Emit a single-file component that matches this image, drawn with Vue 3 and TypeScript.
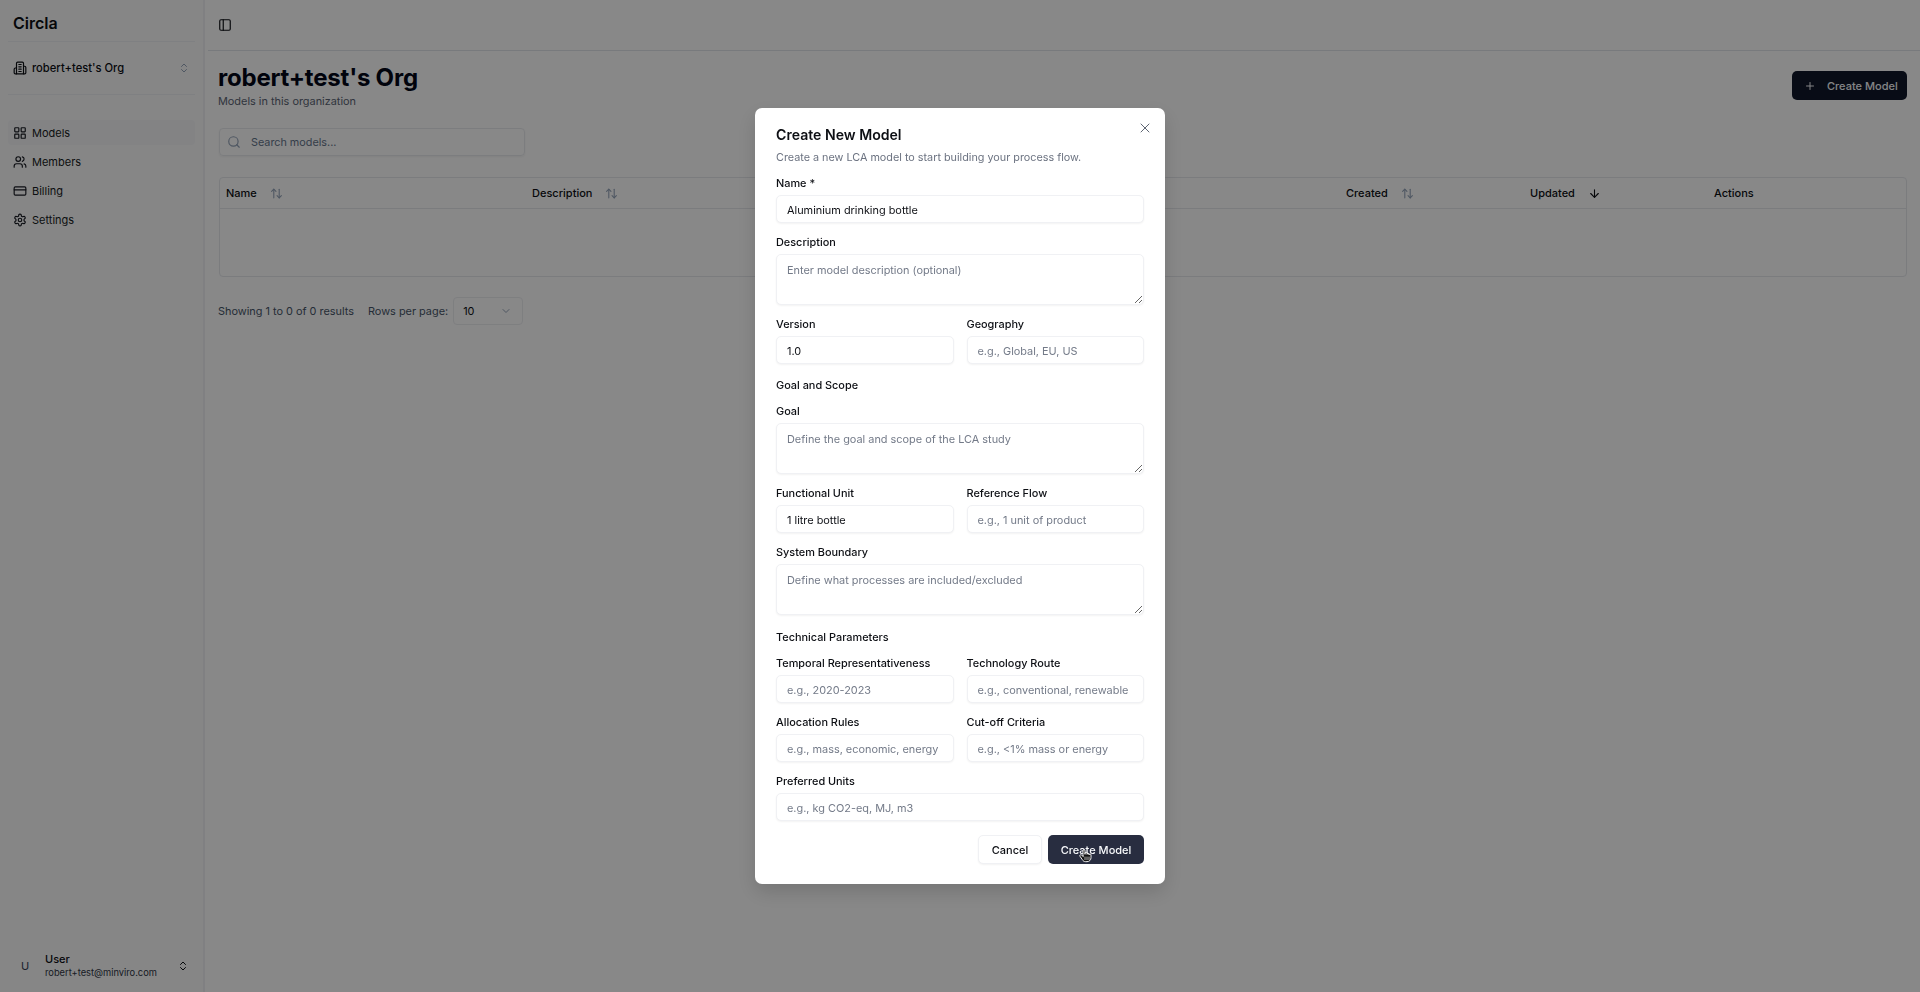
<script setup lang="ts">
const nav = [
  { label: 'Models', active: true, icon: '<rect x="3" y="3" width="7" height="7" rx="1"/><rect x="14" y="3" width="7" height="7" rx="1"/><rect x="14" y="14" width="7" height="7" rx="1"/><rect x="3" y="14" width="7" height="7" rx="1"/>' },
  { label: 'Members', active: false, icon: '<path d="M16 21v-2a4 4 0 0 0-4-4H6a4 4 0 0 0-4 4v2"/><circle cx="9" cy="7" r="4"/><path d="M22 21v-2a4 4 0 0 0-3-3.87"/><path d="M16 3.13a4 4 0 0 1 0 7.75"/>' },
  { label: 'Billing', active: false, icon: '<rect x="2" y="5" width="20" height="14" rx="2"/><line x1="2" y1="10" x2="22" y2="10"/>' },
  { label: 'Settings', active: false, icon: '<path d="M12.22 2h-.44a2 2 0 0 0-2 2v.18a2 2 0 0 1-1 1.73l-.43.25a2 2 0 0 1-2 0l-.15-.08a2 2 0 0 0-2.73.73l-.22.38a2 2 0 0 0 .73 2.73l.15.1a2 2 0 0 1 1 1.72v.51a2 2 0 0 1-1 1.74l-.15.09a2 2 0 0 0-.73 2.73l.22.38a2 2 0 0 0 2.73.73l.15-.08a2 2 0 0 1 2 0l.43.25a2 2 0 0 1 1 1.73V20a2 2 0 0 0 2 2h.44a2 2 0 0 0 2-2v-.18a2 2 0 0 1 1-1.73l.43-.25a2 2 0 0 1 2 0l.15.08a2 2 0 0 0 2.73-.73l.22-.39a2 2 0 0 0-.73-2.73l-.15-.08a2 2 0 0 1-1-1.74v-.5a2 2 0 0 1 1-1.74l.15-.09a2 2 0 0 0 .73-2.73l-.22-.38a2 2 0 0 0-2.73-.73l-.15.08a2 2 0 0 1-2 0l-.43-.25a2 2 0 0 1-1-1.73V4a2 2 0 0 0-2-2z"/><circle cx="12" cy="12" r="3"/>' },
]
const columns = [
  { label: 'Name', width: 306, sort: 'both' },
  { label: 'Description', width: 814, sort: 'both' },
  { label: 'Created', width: 184, sort: 'both' },
  { label: 'Updated', width: 184, sort: 'down' },
  { label: 'Actions', width: 195, sort: 'none' },
]
</script>

<template>
  <div class="app">
    <aside class="sidebar">
      <div class="brand">Circla</div>
      <div class="org">
        <svg class="ic14" viewBox="0 0 24 24"><path d="M6 22V4a2 2 0 0 1 2-2h8a2 2 0 0 1 2 2v18Z"/><path d="M6 12H4a2 2 0 0 0-2 2v6a2 2 0 0 0 2 2h2"/><path d="M18 9h2a2 2 0 0 1 2 2v9a2 2 0 0 1-2 2h-2"/><path d="M10 6h4"/><path d="M10 10h4"/><path d="M10 14h4"/><path d="M10 18h4"/></svg>
        <span class="org-name">robert+test's Org</span>
        <svg class="ic12 muted-ic" viewBox="0 0 24 24"><path d="m7 15 5 5 5-5"/><path d="m7 9 5-5 5 5"/></svg>
      </div>
      <nav class="nav">
        <div v-for="item in nav" :key="item.label" class="nav-item" :class="{ active: item.active }">
          <svg class="ic14" viewBox="0 0 24 24" v-html="item.icon"></svg>
          <span>{{ item.label }}</span>
        </div>
      </nav>
      <div class="user">
        <div class="avatar">U</div>
        <div class="user-text">
          <div class="user-name">User</div>
          <div class="user-mail">robert+test@minviro.com</div>
        </div>
        <svg class="ic12" viewBox="0 0 24 24"><path d="m7 15 5 5 5-5"/><path d="m7 9 5-5 5 5"/></svg>
      </div>
    </aside>

    <main class="main">
      <header class="topbar">
        <svg class="ic14" viewBox="0 0 24 24"><rect x="3" y="3" width="18" height="18" rx="2"/><path d="M9 3v18"/></svg>
      </header>
      <section class="content">
        <div class="head">
          <div>
            <h1>robert+test's Org</h1>
            <p>Models in this organization</p>
          </div>
          <button class="primary-top">
            <svg class="ic12" viewBox="0 0 24 24"><path d="M5 12h14"/><path d="M12 5v14"/></svg>
            Create Model
          </button>
        </div>
        <div class="search">
          <svg class="ic14 muted-ic" viewBox="0 0 24 24"><circle cx="11" cy="11" r="8"/><path d="m21 21-4.3-4.3"/></svg>
          <span>Search models...</span>
        </div>
        <div class="table">
          <div class="thead">
            <div v-for="c in columns" :key="c.label" class="th" :style="{ width: c.width + 'px' }">
              <span>{{ c.label }}</span>
              <svg v-if="c.sort === 'both'" class="ic13 muted-ic" viewBox="0 0 24 24"><path d="m21 16-4 4-4-4"/><path d="M17 20V4"/><path d="m3 8 4-4 4 4"/><path d="M7 4v16"/></svg>
              <svg v-else-if="c.sort === 'down'" class="ic13" viewBox="0 0 24 24"><path d="M12 5v14"/><path d="m19 12-7 7-7-7"/></svg>
            </div>
          </div>
          <div class="tbody"></div>
        </div>
        <div class="pager">
          <span>Showing 1 to 0 of 0 results</span>
          <span class="rows">Rows per page:</span>
          <div class="select">
            <span>10</span>
            <svg class="ic12 muted-ic" viewBox="0 0 24 24"><path d="m6 9 6 6 6-6"/></svg>
          </div>
        </div>
      </section>
    </main>

    <div class="overlay">
      <div class="dialog">
        <button class="close" aria-label="Close">
          <svg viewBox="0 0 24 24"><path d="M18 6 6 18"/><path d="m6 6 12 12"/></svg>
        </button>
        <h2>Create New Model</h2>
        <p class="dialog-sub">Create a new LCA model to start building your process flow.</p>
        <form class="form" @submit.prevent>
          <label class="field"><span>Name *</span><input value="Aluminium drinking bottle" /></label>
          <label class="field"><span>Description</span><textarea placeholder="Enter model description (optional)"></textarea></label>
          <div class="two">
            <label class="field"><span>Version</span><input value="1.0" /></label>
            <label class="field"><span>Geography</span><input placeholder="e.g., Global, EU, US" /></label>
          </div>
          <div class="section-title first">Goal and Scope</div>
          <label class="field"><span>Goal</span><textarea placeholder="Define the goal and scope of the LCA study"></textarea></label>
          <div class="two">
            <label class="field"><span>Functional Unit</span><input value="1 litre bottle" /></label>
            <label class="field"><span>Reference Flow</span><input placeholder="e.g., 1 unit of product" /></label>
          </div>
          <label class="field"><span>System Boundary</span><textarea placeholder="Define what processes are included/excluded"></textarea></label>
          <div class="section-title second">Technical Parameters</div>
          <div class="two">
            <label class="field"><span>Temporal Representativeness</span><input placeholder="e.g., 2020-2023" /></label>
            <label class="field"><span>Technology Route</span><input placeholder="e.g., conventional, renewable" /></label>
          </div>
          <div class="two">
            <label class="field"><span>Allocation Rules</span><input placeholder="e.g., mass, economic, energy" /></label>
            <label class="field"><span>Cut-off Criteria</span><input placeholder="e.g., &lt;1% mass or energy" /></label>
          </div>
          <label class="field"><span>Preferred Units</span><input placeholder="e.g., kg CO2-eq, MJ, m3" /></label>
          <div class="actions">
            <button type="button" class="cancel">Cancel</button>
            <button type="submit" class="submit">Create Model</button>
            <svg class="cursor" viewBox="0 0 24 24" aria-hidden="true"><path d="M9 11V5.5a1.5 1.5 0 0 1 3 0V11l0-1.5a1.5 1.5 0 0 1 3 0V11a1.5 1.5 0 0 1 3 0v1a1.5 1.5 0 0 1 3 0v4c0 3.5-2.5 6-6 6h-2c-2.5 0-3.8-1-5-3l-3.6-5.2c-.9-1.6 1.2-3 2.5-1.6L9 14z"/><path class="lines" d="M12 15v4M15 15v4M18 15v4"/></svg>
          </div>
        </form>
      </div>
    </div>
  </div>
</template>

<style>
html, body { margin: 0; height: 100%; overflow: hidden; }
</style>

<style scoped>
.app {
  display: flex;
  height: 992px;
  background: #fff;
  color: #0d0f14;
  font-family: Inter, "Liberation Sans", sans-serif;
  font-size: 12px;
}
svg { fill: none; stroke: currentColor; stroke-width: 2; stroke-linecap: round; stroke-linejoin: round; flex: none; }
.ic14 { width: 14px; height: 14px; }
.ic13 { width: 13px; height: 13px; }
.ic12 { width: 12px; height: 12px; }
.muted-ic { color: #94a3b8; }

.sidebar {
  width: 205px;
  flex: none;
  box-sizing: border-box;
  display: flex;
  flex-direction: column;
  background: #fbfbfc;
  border-right: 2px solid #f0f1f3;
}
.brand { height: 42px; box-sizing: border-box; margin: 0 8px; padding: 13px 5px 0; font-size: 16px; line-height: 20px; font-weight: 600; border-bottom: 1px solid #eef0f3; }
.org { display: flex; align-items: center; gap: 5px; height: 53px; margin: 0 8px; padding: 0 5px; box-sizing: border-box; border-bottom: 1px solid #eef0f3; font-weight: 500; font-size: 11.2px; }
.org-name { flex: 1; }
.nav { display: flex; flex-direction: column; margin-top: 25px; padding: 0 8px; gap: 4.3px; }
.nav-item { display: flex; align-items: center; gap: 5px; height: 25px; padding: 0 5px; border-radius: 4px; font-size: 11px; color: #181b22; }
.nav-item.active { background: #f5f6f8; }
.user { margin-top: auto; display: flex; align-items: center; padding: 0 14px 9px 17px; height: 35px; }
.avatar { width: 16px; height: 16px; display: flex; align-items: center; justify-content: center; font-size: 11px; color: #334155; margin-right: 12px; }
.user-text { flex: 1; }
.user-name { font-size: 11px; line-height: 13px; font-weight: 500; }
.user-mail { font-size: 9.3px; line-height: 13px; color: #2f3644; }

.main { flex: 1; min-width: 0; display: flex; flex-direction: column; }
.topbar { height: 51px; box-sizing: border-box; border-bottom: 1px solid #e2e5ea; margin-left: 3px; display: flex; align-items: center; padding-left: 10px; padding-bottom: 1px; }
.content { padding: 11px 13px 0 13px; display: flex; flex-direction: column; }
.head { display: flex; justify-content: space-between; height: 66px; }
h1 { margin: 1px 0 0; font-size: 24px; line-height: 30px; font-weight: 700; letter-spacing: -0.2px; color: #020617; }
.head p { margin: 1px 0 0; font-size: 10.9px; line-height: 14px; color: #5b6475; }
.primary-top {
  margin: 9px 0 0;
  width: 115px; height: 29px; padding: 0 0 0 12px;
  display: flex; align-items: center; gap: 11px;
  border: none; border-radius: 5px; background: #0f172a; color: #f8fafc;
  font: 500 11px Inter, sans-serif;
}
.search {
  width: 306px; height: 28px; box-sizing: border-box; margin-left: 1px;
  display: flex; align-items: center; gap: 10px; padding: 0 7px;
  border: 1px solid #e9ebef; border-radius: 4px; box-shadow: 0 1px 2px rgba(0,0,0,.05);
  color: #64748b; font-size: 10.8px;
}
.table { margin: 21px 0 0 1px; width: 1688px; border: 1px solid #e6e8ec; border-radius: 4px; box-sizing: border-box; height: 100px; }
.thead { display: flex; height: 30px; border-bottom: 1px solid #e6e8ec; }
.th { display: flex; align-items: center; gap: 13px; padding-left: 6px; box-sizing: border-box; font-weight: 500; font-size: 11px; color: #0d0f14; }
.pager { display: flex; align-items: center; margin-top: 20px; height: 28px; font-size: 10.9px; color: #475569; }
.rows { margin-left: 14px; }
.select { width: 70px; height: 28px; margin-left: 5px; box-sizing: border-box; display: flex; align-items: center; justify-content: space-between; padding: 0 10px 0 9px; border: 1px solid #eceef1; border-radius: 4px; color: #0d0f14; }

.overlay { position: fixed; inset: 0; display: flex; align-items: center; justify-content: center; background: rgba(0, 0, 0, .465); }
.dialog { position: relative; width: 410px; height: 776px; box-sizing: border-box; padding: 19px 21px 20px; background: #fff; border-radius: 7px; box-shadow: 0 8px 20px rgba(0,0,0,.15); }
.close { position: absolute; top: 12px; right: 12px; width: 16px; height: 16px; padding: 0; border: none; background: none; color: #5f6673; }
.close svg { display: block; width: 16px; height: 16px; stroke-width: 1.5; }
h2 { margin: 0; font-size: 14.1px; line-height: 16px; font-weight: 600; color: #0d0f14; }
.dialog-sub { margin: 8px 0 0; font-size: 10.8px; line-height: 14px; color: #6b7280; }
.form { margin-top: 11px; display: flex; flex-direction: column; gap: 12px; }
.field { display: flex; flex-direction: column; gap: 5px; min-width: 0; }
.field > span { font-size: 10.9px; line-height: 14px; font-weight: 500; color: #0d0f14; }
.two { display: grid; grid-template-columns: 1fr 1fr; gap: 13px; }
input, textarea {
  box-sizing: border-box; width: 100%;
  padding: 1px 10px 0; height: 28px;
  border: 1px solid #f0f1f4; border-radius: 5px; outline: none;
  box-shadow: 0 1px 2px rgba(0,0,0,.05);
  font: 400 10.9px Inter, sans-serif; color: #0d0f14; background: #fff;
}
textarea { height: 51px; padding: 8px 10px; line-height: 14px; display: block; }
input::placeholder, textarea::placeholder { color: #737a88; opacity: 1; }
.section-title { font-size: 10.9px; line-height: 14px; font-weight: 500; color: #0d0f14; }
.section-title.first { margin-top: 2px; }
.section-title.second { margin-top: 3px; }
.actions { position: relative; display: flex; justify-content: flex-end; gap: 6px; margin-top: 2px; }
.cancel, .submit { height: 29px; border-radius: 5px; font: 500 11px Inter, sans-serif; padding: 0; }
.cancel { width: 64px; background: #fff; border: 1px solid #f0f1f4; color: #0d0f14; box-shadow: 0 1px 2px rgba(0,0,0,.05); }
.submit { width: 96px; background: #282d40; border: none; color: #f8fafc; }
.cursor { position: absolute; right: 51px; top: 12px; width: 16px; height: 16px; fill: #111; stroke: #fff; stroke-width: 1.4; }
.cursor .lines { stroke: #fff; stroke-width: 1; }
</style>
